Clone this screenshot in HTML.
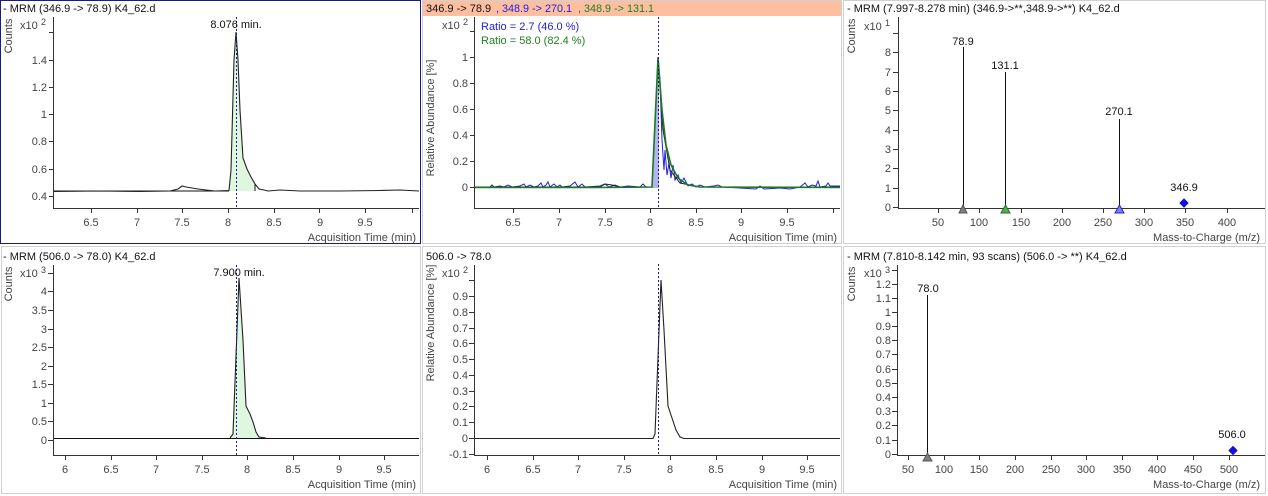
<!DOCTYPE html>
<html><head><meta charset="utf-8"><style>
html,body{margin:0;padding:0;background:#fff;}
svg{display:block;font-family:"Liberation Sans",Arial,sans-serif;font-size:11px;}
.t{fill:#444;}
.k{fill:#111;}
.ax{stroke:#333;stroke-width:1;fill:none;}
.tr{fill:none;stroke:#222;stroke-width:1.1;}
</style></head><body>
<svg width="1268" height="496" viewBox="0 0 1268 496" xmlns="http://www.w3.org/2000/svg">
<rect x="0" y="0" width="1268" height="496" fill="#fff"/>
<rect x="422.5" y="0.5" width="419" height="243" fill="none" stroke="#d0d0d0"/>
<rect x="843.5" y="0.5" width="422" height="243" fill="none" stroke="#d0d0d0"/>
<rect x="1.5" y="246.5" width="419" height="247" fill="none" stroke="#d0d0d0"/>
<rect x="422.5" y="246.5" width="419" height="247" fill="none" stroke="#d0d0d0"/>
<rect x="843.5" y="246.5" width="422" height="247" fill="none" stroke="#d0d0d0"/>
<rect x="0.5" y="0.5" width="420" height="243" fill="none" stroke="#1a1a80"/>

<text x="3" y="12" class="k">- MRM (346.9 -&gt; 78.9) K4_62.d</text>
<text transform="translate(12,36) rotate(-90)" text-anchor="middle" class="t">Counts</text>
<text x="20" y="29" class="t">x10</text><text x="41" y="25" class="t" font-size="9">2</text>
<path class="ax" d="M53.5 17V208.5H419M49 32.5h4.5M49 60.5h4.5M49 87.5h4.5M49 114.5h4.5M49 141.5h4.5M49 169.5h4.5M49 196.5h4.5M91.5 208v5M137.5 208v5M182.5 208v5M228.5 208v5M274.5 208v5M319.5 208v5M365.5 208v5M412.5 208v5"/>
<g class="t" text-anchor="end"><text x="47" y="64">1.4</text><text x="47" y="91">1.2</text><text x="47" y="118">1</text><text x="47" y="145">0.8</text><text x="47" y="173">0.6</text><text x="47" y="200">0.4</text></g>
<g class="t" text-anchor="middle"><text x="91" y="226">6.5</text><text x="137" y="226">7</text><text x="182" y="226">7.5</text><text x="228" y="226">8</text><text x="274" y="226">8.5</text><text x="320" y="226">9</text><text x="365" y="226">9.5</text></g>
<text x="416" y="241" text-anchor="end" class="t">Acquisition Time (min)</text>
<path d="M229 191L231 170L234 60L236 32L238 60L240 110L243 158L247 169L251 177L255 184V191Z" fill="#dff7df"/>
<path d="M54 191L229 191M255 184V191" stroke="#111" fill="none"/>
<path class="tr" d="M54 191.5L100 191L140 191.5L170 191L178 189L182 186L186 187L192 188L198 189L206 190L215 191L229 190.5L231 170L234 60L236 32L238 60L240 110L243 158L247 169L251 177L255 184L259 189L264 190L268 191L280 190L300 191L340 191L380 190.5L400 190L419 191"/>
<line x1="236.5" y1="17" x2="236.5" y2="208" stroke="#1a1a90" stroke-dasharray="2,2"/>
<text x="236" y="28" text-anchor="middle" class="k">8.076 min.</text>

<rect x="423" y="1" width="418" height="15" fill="#fdbf9f"/>
<text x="426" y="12" fill="#111">346.9 -&gt; 78.9</text>
<text x="496" y="12" fill="#2020e0" textLength="76" lengthAdjust="spacingAndGlyphs">, 348.9 -&gt; 270.1</text>
<text x="578" y="12" fill="#208020" textLength="76" lengthAdjust="spacingAndGlyphs">, 348.9 -&gt; 131.1</text>
<text transform="translate(434,118) rotate(-90)" text-anchor="middle" class="t">Relative Abundance [%]</text>
<text x="442" y="29" class="t">x10</text><text x="463" y="25" class="t" font-size="9">2</text>
<text x="481" y="30" fill="#2020e0">Ratio = 2.7 (46.0 %)</text>
<text x="481" y="44" fill="#208020">Ratio = 58.0 (82.4 %)</text>
<path class="ax" d="M474.5 17V208.5H840M470 31.5h4.5M470 57.5h4.5M470 83.5h4.5M470 109.5h4.5M470 135.5h4.5M470 161.5h4.5M470 187.5h4.5M513.5 208v5M559.5 208v5M605.5 208v5M650.5 208v5M696.5 208v5M741.5 208v5M787.5 208v5M833.5 208v5"/>
<g class="t" text-anchor="end"><text x="468" y="61">1</text><text x="468" y="87">0.8</text><text x="468" y="113">0.6</text><text x="468" y="139">0.4</text><text x="468" y="165">0.2</text><text x="468" y="191">0</text></g>
<g class="t" text-anchor="middle"><text x="513" y="226">6.5</text><text x="559" y="226">7</text><text x="605" y="226">7.5</text><text x="650" y="226">8</text><text x="696" y="226">8.5</text><text x="741" y="226">9</text><text x="787" y="226">9.5</text></g>
<text x="837" y="241" text-anchor="end" class="t">Acquisition Time (min)</text>
<path d="M652 187L658 57L659 60V188H652Z" fill="#b4b4f0"/>
<path fill="none" stroke="#2020e0" stroke-width="1" d="M475 187L490 187L492 185L494 187L500 186L504 187L508 185L512 187L520 186L524 184L526 187L530 185L534 187L538 186L541 183L543 187L546 185L548 182L550 187L554 184L557 187L560 185L562 187L570 186L575 182L578 187L582 184L585 187L600 186L605 184L609 187L615 185L620 187L628 186L640 187L643 184L646 187L652 187L658 57L660 80L662 140L664 170L665 150L667 175L669 163L671 178L673 165L675 180L678 175L681 183L684 178L688 186L692 184L696 187L700 185L705 187L714 186L718 185L722 187L740 188L756 189L760 186L764 189L780 188L790 189L800 187L805 183L808 187L812 185L816 186L818 181L820 187L826 186L828 183L830 186L840 186"/>
<path fill="none" stroke="#222" stroke-width="1" d="M475 187L600 187L605 184L612 185L620 187L652 187L658 60L663 130L670 170L680 183L700 187L840 187"/>
<path fill="none" stroke="#1e7a1e" stroke-width="1.6" d="M475 187.5L600 187.5L652 187L658 58L662 110L666 145L671 165L678 178L688 185L700 187L840 187.5"/>
<line x1="658.5" y1="17" x2="658.5" y2="208" stroke="#1a1a90" stroke-dasharray="2,2"/>

<text x="847" y="12" class="k">- MRM (7.997-8.278 min) (346.9-&gt;**,348.9-&gt;**) K4_62.d</text>
<text transform="translate(855,36) rotate(-90)" text-anchor="middle" class="t">Counts</text>
<text x="864" y="30" class="t">x10</text><text x="885" y="26" class="t" font-size="9">1</text>
<path class="ax" d="M898.5 17V208.5H1265M893 33.5h5.5M893 52.5h5.5M893 72.5h5.5M893 91.5h5.5M893 110.5h5.5M893 130.5h5.5M893 149.5h5.5M893 168.5h5.5M893 188.5h5.5M893 207.5h5.5M938.5 208v5M979.5 208v5M1021.5 208v5M1062.5 208v5M1103.5 208v5M1144.5 208v5M1185.5 208v5M1227.5 208v5"/>
<g class="t" text-anchor="end"><text x="891" y="56">8</text><text x="891" y="76">7</text><text x="891" y="95">6</text><text x="891" y="114">5</text><text x="891" y="134">4</text><text x="891" y="153">3</text><text x="891" y="172">2</text><text x="891" y="192">1</text><text x="891" y="211">0</text></g>
<g class="t" text-anchor="middle"><text x="938" y="226">50</text><text x="979" y="226">100</text><text x="1021" y="226">150</text><text x="1062" y="226">200</text><text x="1103" y="226">250</text><text x="1144" y="226">300</text><text x="1185" y="226">350</text><text x="1227" y="226">400</text></g>
<text x="1260" y="241" text-anchor="end" class="t">Mass-to-Charge (m/z)</text>
<path d="M963.5 47V208M1005.5 72V208M1119.5 119V208" stroke="#111"/>
<path d="M959 213L963 205L967 213Z" fill="#808080" stroke="#555"/>
<path d="M1001 213L1005.5 205L1010 213Z" fill="#50b050" stroke="#207020"/>
<path d="M1115 213L1119.5 205L1124 213Z" fill="#8080ff" stroke="#2020d0"/>
<path d="M1184 199L1188 203L1184 207L1180 203Z" fill="#1010f0" stroke="#1010c0"/>
<g class="k" text-anchor="middle"><text x="963" y="45">78.9</text><text x="1005" y="69">131.1</text><text x="1119" y="115">270.1</text><text x="1184" y="191">346.9</text></g>

<text x="3" y="260" class="k">- MRM (506.0 -&gt; 78.0) K4_62.d</text>
<text transform="translate(12,284) rotate(-90)" text-anchor="middle" class="t">Counts</text>
<text x="20" y="277" class="t">x10</text><text x="41" y="273" class="t" font-size="9">3</text>
<path class="ax" d="M53.5 265V455.5H419M48 273.5h5.5M48 291.5h5.5M48 310.5h5.5M48 329.5h5.5M48 347.5h5.5M48 366.5h5.5M48 384.5h5.5M48 403.5h5.5M48 421.5h5.5M48 440.5h5.5M65.5 455v5M111.5 455v5M156.5 455v5M202.5 455v5M247.5 455v5M293.5 455v5M339.5 455v5M384.5 455v5"/>
<g class="t" text-anchor="end"><text x="47" y="295">4</text><text x="47" y="314">3.5</text><text x="47" y="333">3</text><text x="47" y="351">2.5</text><text x="47" y="370">2</text><text x="47" y="388">1.5</text><text x="47" y="407">1</text><text x="47" y="425">0.5</text><text x="47" y="444">0</text></g>
<g class="t" text-anchor="middle"><text x="65" y="473">6</text><text x="111" y="473">6.5</text><text x="156" y="473">7</text><text x="202" y="473">7.5</text><text x="247" y="473">8</text><text x="293" y="473">8.5</text><text x="339" y="473">9</text><text x="384" y="473">9.5</text></g>
<text x="416" y="488" text-anchor="end" class="t">Acquisition Time (min)</text>
<path d="M232 438L239 278L243 340L246 406L250 414L253 422L256 432L259 437L263 438Z" fill="#dff7df"/>
<line x1="54" y1="438.5" x2="419" y2="438.5" stroke="#111"/>
<path class="tr" d="M230 438L233 434L239 278L243 340L246 406L250 414L253 422L256 432L259 437L266 438"/>
<line x1="236.5" y1="265" x2="236.5" y2="455" stroke="#1a1a90" stroke-dasharray="2,2"/>
<text x="239" y="276" text-anchor="middle" class="k">7.900 min.</text>

<text x="426" y="260" class="k">506.0 -&gt; 78.0</text>
<text transform="translate(434,323) rotate(-90)" text-anchor="middle" class="t">Relative Abundance [%]</text>
<text x="442" y="277" class="t">x10</text><text x="463" y="273" class="t" font-size="9">2</text>
<path class="ax" d="M474.5 265V455.5H840M469 280.5h5.5M469 296.5h5.5M469 312.5h5.5M469 328.5h5.5M469 343.5h5.5M469 359.5h5.5M469 375.5h5.5M469 391.5h5.5M469 406.5h5.5M469 422.5h5.5M469 438.5h5.5M469 454.5h5.5M487.5 455v5M533.5 455v5M578.5 455v5M624.5 455v5M670.5 455v5M716.5 455v5M762.5 455v5M807.5 455v5"/>
<g class="t" text-anchor="end"><text x="468" y="300">0.9</text><text x="468" y="316">0.8</text><text x="468" y="332">0.7</text><text x="468" y="347">0.6</text><text x="468" y="363">0.5</text><text x="468" y="379">0.4</text><text x="468" y="395">0.3</text><text x="468" y="410">0.2</text><text x="468" y="426">0.1</text><text x="468" y="442">0</text><text x="468" y="458">-0.1</text></g>
<g class="t" text-anchor="middle"><text x="487" y="473">6</text><text x="533" y="473">6.5</text><text x="578" y="473">7</text><text x="624" y="473">7.5</text><text x="670" y="473">8</text><text x="716" y="473">8.5</text><text x="762" y="473">9</text><text x="807" y="473">9.5</text></g>
<text x="837" y="488" text-anchor="end" class="t">Acquisition Time (min)</text>
<path class="tr" d="M475 438.5L653 438.5L655 434L661 280L664 330L668 406L672 418L676 430L680 437L684 438.5L840 438.5"/>
<line x1="658.5" y1="264" x2="658.5" y2="455" stroke="#1a1a90" stroke-dasharray="2,2"/>

<text x="847" y="260" class="k">- MRM (7.810-8.142 min, 93 scans) (506.0 -&gt; **) K4_62.d</text>
<text transform="translate(855,284) rotate(-90)" text-anchor="middle" class="t">Counts</text>
<text x="864" y="277" class="t">x10</text><text x="885" y="273" class="t" font-size="9">3</text>
<path class="ax" d="M897.5 265V455.5H1265M892 270.5h5.5M892 284.5h5.5M892 298.5h5.5M892 312.5h5.5M892 326.5h5.5M892 340.5h5.5M892 354.5h5.5M892 369.5h5.5M892 383.5h5.5M892 397.5h5.5M892 411.5h5.5M892 425.5h5.5M892 440.5h5.5M892 454.5h5.5M908.5 455v5M944.5 455v5M979.5 455v5M1015.5 455v5M1051.5 455v5M1086.5 455v5M1122.5 455v5M1157.5 455v5M1193.5 455v5M1229.5 455v5"/>
<g class="t" text-anchor="end"><text x="891" y="288">1.2</text><text x="891" y="302">1.1</text><text x="891" y="316">1</text><text x="891" y="330">0.9</text><text x="891" y="344">0.8</text><text x="891" y="358">0.7</text><text x="891" y="373">0.6</text><text x="891" y="387">0.5</text><text x="891" y="401">0.4</text><text x="891" y="415">0.3</text><text x="891" y="429">0.2</text><text x="891" y="444">0.1</text><text x="891" y="458">0</text></g>
<g class="t" text-anchor="middle"><text x="908" y="473">50</text><text x="944" y="473">100</text><text x="979" y="473">150</text><text x="1015" y="473">200</text><text x="1051" y="473">250</text><text x="1086" y="473">300</text><text x="1122" y="473">350</text><text x="1157" y="473">400</text><text x="1193" y="473">450</text><text x="1229" y="473">500</text></g>
<text x="1260" y="488" text-anchor="end" class="t">Mass-to-Charge (m/z)</text>
<path d="M927.5 295V455" stroke="#111"/>
<path d="M923 461L927.5 453L932 461Z" fill="#808080" stroke="#555"/>
<path d="M1233 446.5L1237 450.5L1233 454.5L1229 450.5Z" fill="#1010f0" stroke="#1010c0"/>
<g class="k" text-anchor="middle"><text x="928" y="292">78.0</text><text x="1232" y="438">506.0</text></g>
</svg>
</body></html>
